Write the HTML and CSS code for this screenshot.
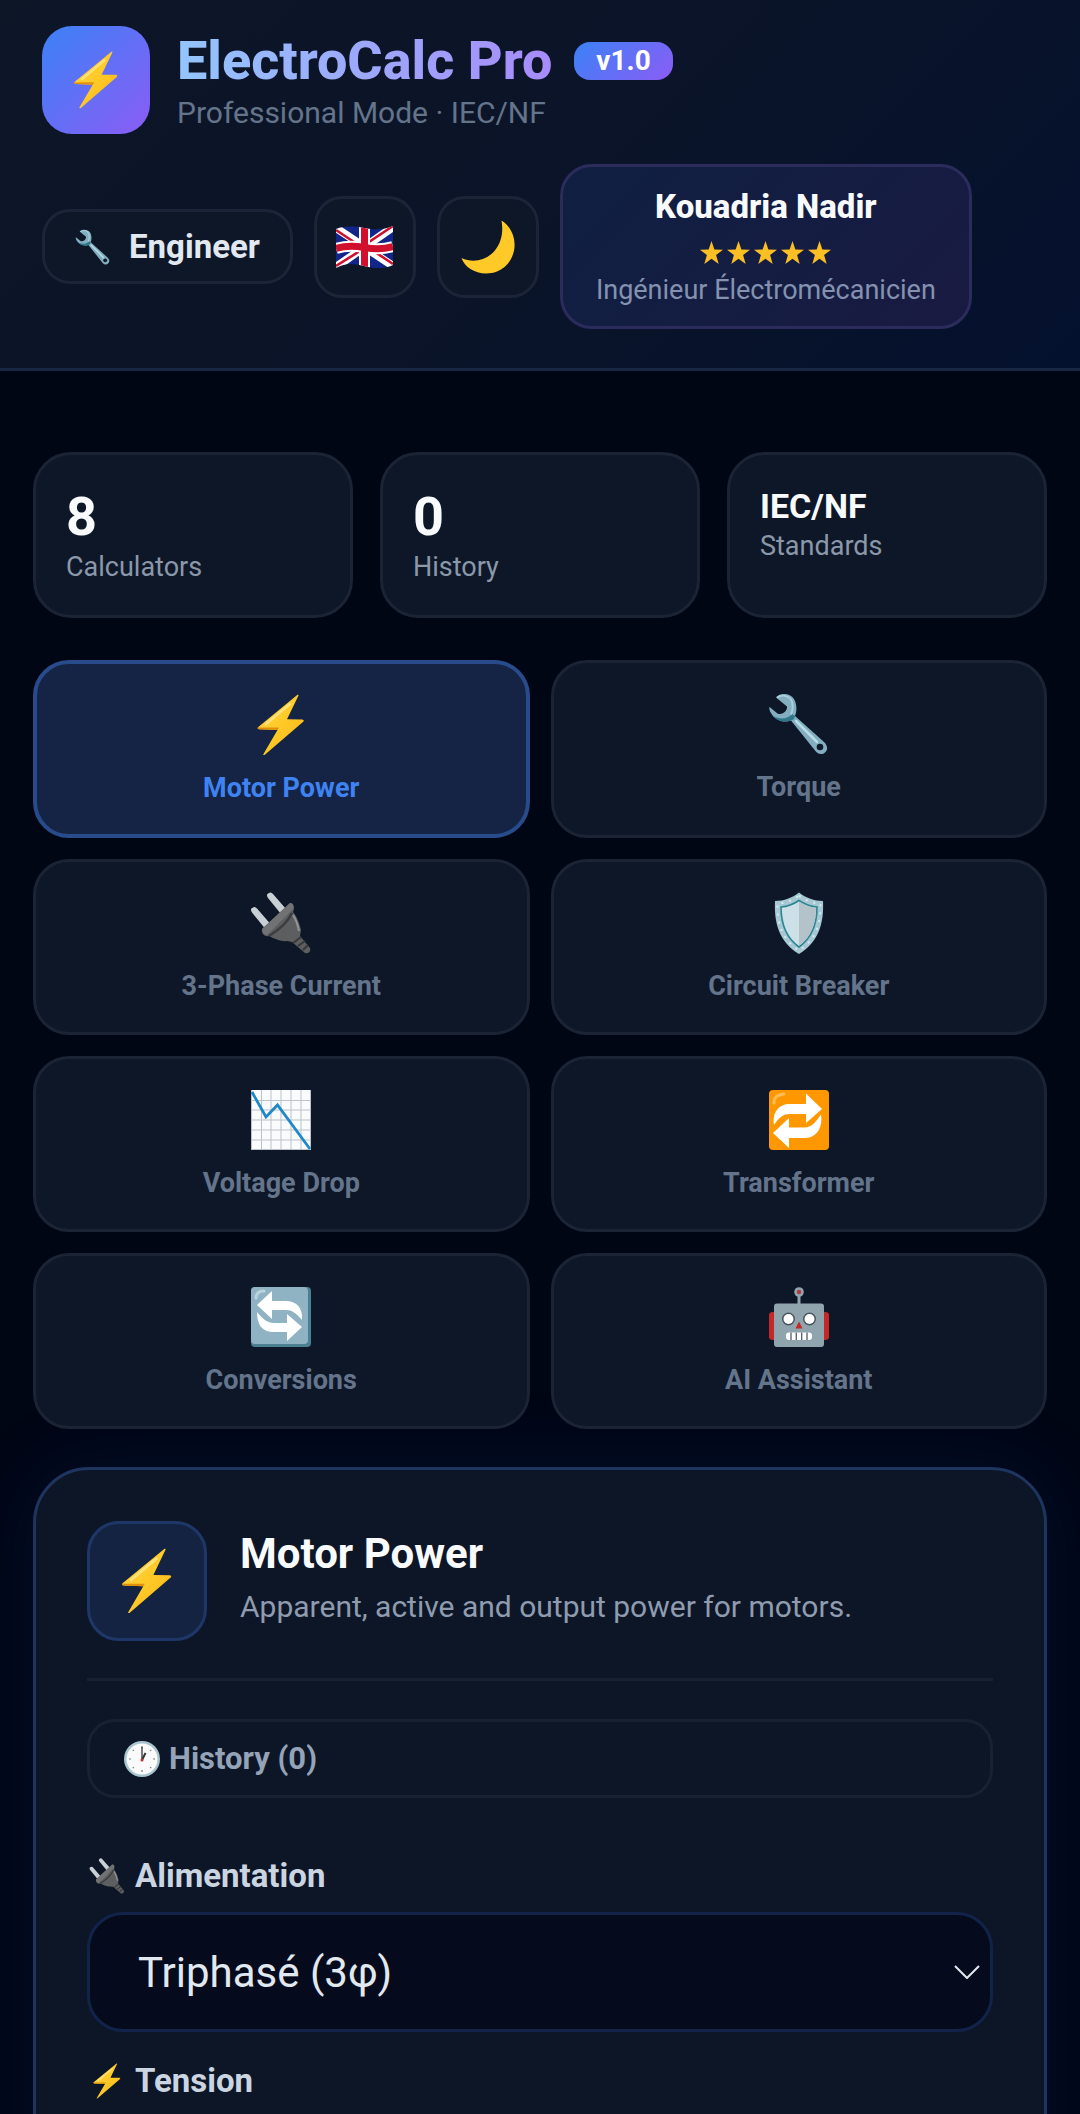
FILE: index.html
```html
<!DOCTYPE html>
<html lang="en">
<head>
<meta charset="utf-8">
<meta name="viewport" content="width=device-width, initial-scale=1">
<title>ElectroCalc Pro</title>
<link rel="stylesheet" href="styles.css">
</head>
<body>
<svg class="sprite" aria-hidden="true">
  <defs>
    <linearGradient id="boltFill" x1="0" y1="0" x2="1" y2="1">
      <stop offset="0" stop-color="#ffd54a"/><stop offset=".5" stop-color="#ffca28"/><stop offset="1" stop-color="#f9b413"/>
    </linearGradient>
    <symbol id="i-bolt" viewBox="0 0 62 62">
      <path d="M47.500.8 8 33.200Q7 35 9 35.300L27.500 36 13.200 60.500Q13.500 61.500 14.800 60.800L53.500 27.500Q54.500 26 52.500 25.500L37 25.300 48.500 1.500Q48.500.3 47.500.8Z" fill="url(#boltFill)"/>
      <path d="M8 33.200Q7 35 9 35.300L27.500 36 29 33.500 9.500 33.600Z" fill="#e08f0c"/>
      <path d="M40 10 16 30" stroke="#ffe27a" stroke-width="2.500" stroke-linecap="round"/>
    </symbol>
    <symbol id="i-wrench" viewBox="0 0 62 62">
      <path d="M8 4.500C13-.5 22 0 26 6c3 5 3 12 1 17L56 49c4 4 4 8 1 10.500s-7 2-10-2L23 27.500C17 30 9 28 5 23 1.500 19 .8 15 1.500 14l8 6.500c4 2 10-2 9.500-7L8 4.500Z" fill="#82aebf"/>
      <path d="M23 27.500C17 30 9 28 5 23 12 27 20 26 24 21l3 2-1 3Z" fill="#2f7889"/>
      <path d="M9 4.500c6-4 13-1 15 4 1 5 1 9-1 13" fill="none" stroke="#a9cfdb" stroke-width="2"/>
      <path d="M28 28 49 49" stroke="#b9dce6" stroke-width="2.500" stroke-linecap="round"/>
      <circle cx="52" cy="54" r="3.300" fill="#0f1a2b"/>
    </symbol>
    <symbol id="i-plug" viewBox="0 0 62 62">
      <path d="M1.500 16.500c2-2 4-2 5.500 0l13 15-5 5-13-16c-1-1.500-1.500-3-.5-4ZM17.500 2c2-2 4-2 5.500 0l13 15-5 5L18 6c-1-1.500-1.500-3-.5-4Z" fill="#c8cfd5"/>
      <path d="m12 37 28-26c4 0 5 5 3 9 5 6 7 14 8 18l-1 6 10 12c1 3-1 6-5 5L42 50l-5-1c-5 1-12-2-18-5-4 1-8-2-7-7Z" fill="#5d5e60"/>
      <path d="m12 37 28-26c3 0 4 3 3 6L17 43c-3 0-5-3-5-6Z" fill="#717274"/>
      <path d="M19 44C27 39 37 32 42 21" stroke="#3c3d3f" stroke-width="2.500" fill="none"/>
      <path d="M43 23c4 6 5 11 6 16" stroke="#949596" stroke-width="2" fill="none"/>
      <path d="m43 51 8-6M48 54l7-5M53 58l5-5" stroke="#353638" stroke-width="1.800"/>
    </symbol>
    <symbol id="i-shield" viewBox="0 0 62 62">
      <path d="M31 .5C38 6 46 9 55 9c1 22-4 41-24 53C11 50 6 31 7 9 16 9 24 6 31 .5Z" fill="#a7c8d2"/>
      <path d="M31 3.500C38 9 45 11 52.500 11.500c.5 19-4 36-21.500 47C13.500 47.500 9 30.500 9.500 11.500 17 11 24 9 31 3.500Z" fill="none" stroke="#d6ecf2" stroke-width="2" stroke-dasharray="2 6"/>
      <path d="M31 8.500c6 4 12 6 18 6.500 0 16-4 30-18 40C17 45 13 31 13 15c6-.5 12-2.500 18-6.500Z" fill="#cbe1e7" stroke="#2c8592" stroke-width="1.600"/>
      <path d="M31 9.500c5.500 3.500 11 5.500 17 6.300 0 15-4 28.500-17 38Z" fill="#b4c2c9"/>
    </symbol>
    <symbol id="i-chart" viewBox="0 0 62 62">
      <path d="M1 1h60v60H1Z" fill="#fafbfc"/>
      <path d="M11.500 1v60M21 1v60M31 1v60M41 1v60M51 1v60M1 11.500h60M1 21h60M1 31h60M1 41h60M1 51h60M1 60.500h60M60.500 1v60M1.500 1v60" stroke="#bcc2c7" stroke-width="1"/>
      <path d="m2 3 14 25 11.500-12L60 60" fill="none" stroke="#1e88c9" stroke-width="2.800"/>
    </symbol>
    <symbol id="i-repeat" viewBox="0 0 62 62">
      <rect x="1" y="1" width="60" height="60" rx="4" fill="#ff9800"/>
      <path d="M6 14c0-6 3-8 10-9" stroke="#ffbd55" stroke-width="3" fill="none" stroke-linecap="round"/>
      <path d="M38 4.500 54 20 38 34v-9H22c-8 0-11 4-16 11C4 23 11 15 22 15h16ZM21 59 5 44l16-15v9.500h15c8 0 12-6 17-13C55 38 49 49 37 49H21Z" fill="#fff"/>
    </symbol>
    <symbol id="i-cycle" viewBox="0 0 62 62">
      <rect x="1" y="1" width="60" height="60" rx="4" fill="#4c7f90"/>
      <rect x="1" y="1" width="57" height="57" rx="4" fill="#8fb3c3"/>
      <path d="M6 12c0-5 3-7 8-7" stroke="#b9d4df" stroke-width="3" fill="none" stroke-linecap="round"/>
      <path d="M22 5 7 19l15 14v-9h14c6 0 10 3 16 10 1-12-5-19-17-19H22ZM37 55l15-14-15-13v9H24c-7 0-11-4-17-11 0 13 5 20 17 20h13Z" fill="#fff"/>
    </symbol>
    <symbol id="i-robot" viewBox="0 0 62 62">
      <path d="M31 8v12" stroke="#90a4ae" stroke-width="3"/>
      <circle cx="31" cy="6" r="4.800" fill="#90a4ae"/><circle cx="31" cy="6" r="2.200" fill="#b7363a"/>
      <path d="M1 29q0-3 4-3h2v28H5q-4 0-4-3ZM61 29q0-3-4-3h-2v28h2q4 0 4-3Z" fill="#c62828"/>
      <rect x="6" y="17.500" width="50" height="43.500" rx="3" fill="#90a4ae"/>
      <circle cx="20.500" cy="33" r="6.500" fill="#47555c"/><circle cx="41.500" cy="33" r="6.500" fill="#47555c"/>
      <circle cx="20.500" cy="33" r="5" fill="#fff"/><circle cx="41.500" cy="33" r="5" fill="#fff"/>
      <path d="m31 35.500 3.500 7h-7Z" fill="#c62828"/>
      <rect x="18" y="46.500" width="26" height="7.500" rx="3" fill="#fff"/>
      <path d="M23 46.500v7.500M28.300 46.500v7.500M33.700 46.500v7.500M39 46.500v7.500" stroke="#5b6970" stroke-width="1.400"/>
    </symbol>
    <symbol id="i-flag" viewBox="0 0 57 42">
      <clipPath id="wave"><path d="M0 3C9 0 17 0 28 2s20 2 29-2v39c-9 4-18 4-29 1S9 37 0 42Z"/></clipPath>
      <g clip-path="url(#wave)">
        <path d="M0 0h57v42H0Z" fill="#12268a"/>
        <path d="M0 2 57 40M57 1 0 41" stroke="#fff" stroke-width="8"/>
        <path d="M0 4 27 22M57 38 30 20M57 0 30 18M0 40 27 23" stroke="#d0102c" stroke-width="2.600"/>
        <path d="M28.500 0v42" stroke="#fff" stroke-width="11"/>
        <path d="M0 22.500c9-3 18-3 28.500-1s19 2 28.500-1" fill="none" stroke="#fff" stroke-width="11"/>
        <path d="M28.500 0v42" stroke="#d0102c" stroke-width="7"/>
        <path d="M0 22.500c9-3 18-3 28.500-1s19 2 28.500-1" fill="none" stroke="#d0102c" stroke-width="7"/>
      </g>
    </symbol>
    <symbol id="i-moon" viewBox="0 0 54 54">
      <path d="M40.500.5C60 13 57 43 36 51.500 20 57.500 4 49 .5 38c11 5 24 3 33-7C42 21 42 9 40.500.5Z" fill="#ffca28"/>
    </symbol>
    <symbol id="i-clock" viewBox="0 0 36 36">
      <circle cx="18" cy="18" r="18" fill="#a9c6d0"/><circle cx="18" cy="18" r="15.500" fill="#fafafa"/>
      <path d="M18 5v2M18 29v2M5 18h2M29 18h2M8.800 8.800l1 1M27.200 8.800l-1 1M8.800 27.200l1-1M27.200 27.200l-1-1" stroke="#6d7a80" stroke-width="1.200"/>
      <path d="M18 19V6" stroke="#333" stroke-width="1.300"/><path d="m18 19 3.500-7" stroke="#333" stroke-width="2"/><circle cx="18" cy="19" r="1.500" fill="#b33"/>
    </symbol>
    <symbol id="i-star" viewBox="0 0 24 24">
      <path d="m12 0 3 8.800 9 .2-7.200 5.500L19.500 24 12 18.400 4.500 24l2.700-9.500L0 9l9-.2Z" fill="#fbbf24"/>
    </symbol>
  </defs>
</svg>

<div class="app">
  <header class="header">
    <div class="brand">
      <div class="logo"><svg class="icon-lg"><use href="#i-bolt"/></svg></div>
      <div class="brand-text">
        <div class="brand-line">
          <h1 class="brand-name">ElectroCalc Pro</h1>
          <span class="version">v1.0</span>
        </div>
        <p class="brand-mode">Professional Mode · IEC/NF</p>
      </div>
    </div>
    <div class="toolbar">
      <button class="mode-btn" type="button"><svg class="icon-sm"><use href="#i-wrench"/></svg>Engineer</button>
      <button class="square-btn" type="button" aria-label="Language"><svg class="flag"><use href="#i-flag"/></svg></button>
      <button class="square-btn" type="button" aria-label="Theme"><svg class="moon"><use href="#i-moon"/></svg></button>
      <div class="author">
        <div class="author-name">Kouadria Nadir</div>
        <div class="stars">
          <svg class="star"><use href="#i-star"/></svg><svg class="star"><use href="#i-star"/></svg><svg class="star"><use href="#i-star"/></svg><svg class="star"><use href="#i-star"/></svg><svg class="star"><use href="#i-star"/></svg>
        </div>
        <div class="author-role">Ingénieur Électromécanicien</div>
      </div>
    </div>
  </header>

  <main class="main">
    <section class="stats">
      <div class="stat"><div class="stat-value">8</div><div class="stat-label">Calculators</div></div>
      <div class="stat"><div class="stat-value">0</div><div class="stat-label">History</div></div>
      <div class="stat"><div class="stat-value stat-value-text">IEC/NF</div><div class="stat-label">Standards</div></div>
    </section>

    <nav class="tabs">
      <button class="tab tab-active" type="button"><svg class="icon"><use href="#i-bolt"/></svg>Motor Power</button>
      <button class="tab" type="button"><svg class="icon"><use href="#i-wrench"/></svg>Torque</button>
      <button class="tab" type="button"><svg class="icon"><use href="#i-plug"/></svg>3-Phase Current</button>
      <button class="tab" type="button"><svg class="icon"><use href="#i-shield"/></svg>Circuit Breaker</button>
      <button class="tab" type="button"><svg class="icon"><use href="#i-chart"/></svg>Voltage Drop</button>
      <button class="tab" type="button"><svg class="icon"><use href="#i-repeat"/></svg>Transformer</button>
      <button class="tab" type="button"><svg class="icon"><use href="#i-cycle"/></svg>Conversions</button>
      <button class="tab" type="button"><svg class="icon"><use href="#i-robot"/></svg>AI Assistant</button>
    </nav>

    <section class="panel">
      <div class="panel-head">
        <div class="panel-icon"><svg class="icon-xl"><use href="#i-bolt"/></svg></div>
        <div class="panel-text">
          <h2 class="panel-title">Motor Power</h2>
          <p class="panel-sub">Apparent, active and output power for motors.</p>
        </div>
      </div>
      <button class="history-btn" type="button"><svg class="icon-sm"><use href="#i-clock"/></svg>History (0)</button>
      <div class="field">
        <label class="field-label" for="supply"><svg class="icon-sm"><use href="#i-plug"/></svg>Alimentation</label>
        <div class="select-wrap">
          <select class="control" id="supply"><option>Triphasé (3φ)</option></select>
          <svg class="chevron" viewBox="0 0 26 14"><path d="m1 1 12 12L25 1" fill="none" stroke="#e2e8f0" stroke-width="2"/></svg>
        </div>
      </div>
      <div class="field">
        <label class="field-label" for="voltage"><svg class="icon-sm"><use href="#i-bolt"/></svg>Tension</label>
        <input class="control" id="voltage" type="number">
      </div>
    </section>
  </main>
</div>
</body>
</html>
```
FILE: styles.css
```css
* { box-sizing: border-box; }

body {
  margin: 0;
  background: #010615;
  color: #f8fafc;
  font-family: Roboto, "Liberation Sans", sans-serif;
}

h1, h2, p { margin: 0; }

button, select, input { font-family: inherit; margin: 0; }

svg { display: block; flex: none; }

.sprite { position: absolute; width: 0; height: 0; }

.app {
  height: 100vh;
  overflow-y: auto;
  scrollbar-width: none;
}

.icon-sm { width: 36px; height: 36px; }
.icon-lg { width: 58px; height: 58px; }
.icon { width: 62px; height: 62px; }
.icon-xl { width: 66px; height: 66px; }

/* Header */
.header {
  display: flex;
  flex-direction: column;
  gap: 30px;
  padding: 26px 42px 39px;
  border-bottom: 3px solid #1a2744;
  background: linear-gradient(135deg, #0d1627 0%, #0b1428 50%, #04112e 100%);
}

.brand { display: flex; align-items: center; gap: 27px; }

.logo {
  display: flex;
  align-items: center;
  justify-content: center;
  width: 108px;
  height: 108px;
  border-radius: 30px;
  background: linear-gradient(135deg, #3b82f6, #8b5cf6);
}

.brand-text { display: flex; flex-direction: column; gap: 2px; }

.brand-line { display: flex; align-items: center; gap: 22px; }

.brand-name {
  font-size: 54px;
  line-height: 64px;
  font-weight: 800;
  background: linear-gradient(90deg, #93c5fd, #a78bfa);
  background-clip: text;
  -webkit-background-clip: text;
  color: transparent;
}

.version {
  padding: 0 22px;
  border-radius: 16px;
  background: linear-gradient(135deg, #3b82f6, #8b5cf6);
  color: #fff;
  font-size: 28px;
  line-height: 38px;
  font-weight: 700;
}

.brand-mode { color: #64748b; font-size: 30px; line-height: 36px; }

.toolbar { display: flex; flex-wrap: wrap; align-items: center; gap: 21px; }

.mode-btn, .square-btn {
  display: flex;
  align-items: center;
  justify-content: center;
  border: 3px solid #1c2537;
  background: #0e1728;
}

.mode-btn {
  gap: 18px;
  height: 75px;
  padding: 0 30px;
  border-radius: 28px;
  color: #e2e8f0;
  font-size: 33px;
  font-weight: 700;
}

.square-btn { width: 102px; height: 102px; padding: 0; border-radius: 28px; }

.flag { width: 57px; height: 42px; }
.moon { width: 54px; height: 54px; }

.author {
  padding: 20px 33px;
  border: 3px solid #2c2c5c;
  border-radius: 32px;
  background: linear-gradient(135deg, #0f1f42, #191a42);
  text-align: center;
}

.author-name { font-size: 33px; line-height: 40px; font-weight: 800; }

.stars { display: flex; justify-content: center; gap: 4px; padding: 14px 0 10px; }

.star { width: 23px; height: 23px; }

.author-role { color: #8492b0; font-size: 27px; line-height: 32px; }

/* Main */
.main { padding: 81px 33px 38px; }

.stats {
  display: grid;
  grid-template-columns: repeat(3, 1fr);
  gap: 27px;
}

.stat {
  padding: 30px;
  border: 3px solid #1a2434;
  border-radius: 38px;
  background: #0e1728;
}

.stat-value { font-size: 54px; line-height: 64px; font-weight: 700; }

.stat-value-text { font-size: 34px; line-height: 43px; }

.stat-label { color: #8b98aa; font-size: 27px; line-height: 36px; }

.tabs {
  display: grid;
  grid-template-columns: repeat(2, 1fr);
  gap: 21px;
  margin-top: 42px;
}

.tab {
  display: flex;
  flex-direction: column;
  align-items: center;
  gap: 14px;
  padding: 30px 20px 28px;
  border: 3px solid #1a2434;
  border-radius: 36px;
  background: #0e1728;
  color: #64748b;
  font-size: 27px;
  line-height: 36px;
  font-weight: 700;
}

.tab-active {
  border: 4px solid #284b8c;
  background: #152445;
  color: #3f83f3;
}

/* Calculator panel */
.panel {
  margin-top: 38px;
  padding: 51px;
  border: 3px solid #1e3560;
  border-radius: 56px;
  background: #0d1627;
  box-shadow: 0 0 80px rgba(20, 60, 160, 0.16);
}

.panel-head {
  display: flex;
  gap: 33px;
  padding-bottom: 37px;
  border-bottom: 3px solid #182132;
}

.panel-icon {
  display: flex;
  align-items: center;
  justify-content: center;
  width: 120px;
  height: 120px;
  border: 3px solid #1f3768;
  border-radius: 32px;
  background: #142341;
}

.panel-text {
  display: flex;
  flex-direction: column;
  gap: 10px;
  padding-top: 8px;
}

.panel-title { font-size: 42px; line-height: 50px; font-weight: 700; }

.panel-sub { color: #8f9bae; font-size: 30px; line-height: 36px; }

.history-btn {
  display: flex;
  align-items: center;
  gap: 9px;
  width: 100%;
  height: 79px;
  margin: 38px 0 58px;
  padding: 0 34px;
  border: 3px solid #182132;
  border-radius: 28px;
  background: transparent;
  color: #94a3b8;
  font-size: 31px;
  font-weight: 700;
}

.field { margin-bottom: 29px; }

.field-label {
  display: flex;
  align-items: center;
  gap: 10px;
  margin-bottom: 16px;
  padding-left: 2px;
  color: #cbd5e1;
  font-size: 33px;
  line-height: 40px;
  font-weight: 700;
}

.select-wrap { position: relative; }

.control {
  display: block;
  appearance: none;
  width: 100%;
  height: 120px;
  padding: 0 48px;
  border: 3px solid #12234a;
  border-radius: 36px;
  background: #050b1c;
  color: #e2e8f0;
  font-size: 42px;
}

.chevron {
  position: absolute;
  top: 53px;
  right: 13px;
  width: 26px;
  height: 14px;
  pointer-events: none;
}
```
